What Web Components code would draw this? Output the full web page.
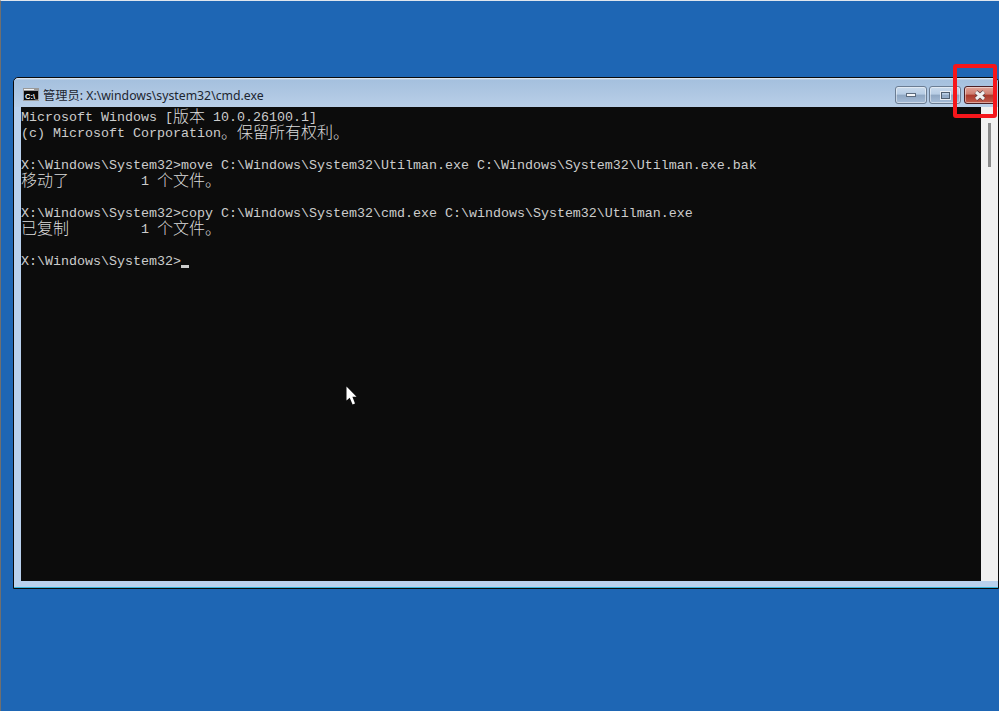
<!DOCTYPE html>
<html>
<head>
<meta charset="utf-8">
<title>cmd</title>
<style>
  html, body { margin: 0; height: 100%; overflow: hidden; background: #1e66b4; }
</style>
</head>
<body>
<win-desktop>
  <console-window title-text="管理员: X:\windows\system32\cmd.exe">
    <console-line>Microsoft Windows [<c-jk>版本</c-jk> 10.0.26100.1]</console-line>
    <console-line>(c) Microsoft Corporation<c-jk>。保留所有权利。</c-jk></console-line>
    <console-line></console-line>
    <console-line>X:\Windows\System32&gt;move C:\Windows\System32\Utilman.exe C:\Windows\System32\Utilman.exe.bak</console-line>
    <console-line><c-jk>移动了</c-jk>         1 <c-jk>个文件。</c-jk></console-line>
    <console-line></console-line>
    <console-line>X:\Windows\System32&gt;copy C:\Windows\System32\cmd.exe C:\windows\System32\Utilman.exe</console-line>
    <console-line><c-jk>已复制</c-jk>         1 <c-jk>个文件。</c-jk></console-line>
    <console-line></console-line>
    <console-line>X:\Windows\System32&gt;<console-caret></console-caret></console-line>
  </console-window>
</win-desktop>

<script>
class WinDesktop extends HTMLElement {
  constructor() {
    super();
    const shadowRoot = this.attachShadow({ mode: 'open' });
    shadowRoot.innerHTML = `
      <style>
        :host {
          display: block;
          position: relative;
          width: 999px;
          height: 711px;
          box-sizing: border-box;
          padding: 76px 0 0 12px;
          overflow: hidden;
          background: #1e66b4;
          border-left: 1px solid #6f6f6f;
          border-top: 1px solid #dfe6ee;
        }
        /* annotation drawn over the close button */
        #mark {
          position: absolute;
          left: 952px;
          top: 63px;
          width: 44px;
          height: 54px;
          box-sizing: border-box;
          border: 4px solid #f5161b;
          border-radius: 3px;
        }
        /* mouse pointer on the free canvas */
        svg { position: absolute; left: 345px; top: 385px; }
      </style>
      <slot></slot>
      <svg width="12" height="19" viewBox="0 0 12 19">
        <path d="M0.5 0.5V14.5L3.7 11.8L6.6 18.5L9 17.5L6.4 10.8H10.5Z" fill="#fff"/>
      </svg>
      <div id="mark"></div>
    `;
  }
}

class ConsoleWindow extends HTMLElement {
  constructor() {
    super();
    const shadowRoot = this.attachShadow({ mode: 'open' });
    shadowRoot.innerHTML = `
      <style>
        :host {
          display: block;
          width: 986px;
          height: 512px;
          box-sizing: border-box;
          border: 1px solid #0b0b0b;
          border-radius: 5px 5px 0 0;
          background: #b9d1ee;
          box-shadow: inset 0 -1px 0 #38b4dc;
        }
        #title {
          display: flex;
          align-items: center;
          box-sizing: border-box;
          height: 29px;
          padding: 4px 2px 0 9px;
          border-radius: 5px 5px 0 0;
          background: linear-gradient(#eaf0f7 0, #a5c0de 2px, #acc5e1 12px, #b9cfe8 29px);
          font: 12.25px "Noto Sans", "Noto Sans CJK SC", sans-serif;
          color: #1c2530;
        }
        #label { margin-left: 4px; flex: 1; white-space: pre; }
        #icon { flex: none; }
        #buttons { display: flex; align-items: flex-start; margin-top: 1px; }
        .btn {
          display: flex;
          align-items: center;
          justify-content: center;
          box-sizing: border-box;
          width: 32px;
          height: 18px;
          margin-left: 2px;
          border: 1px solid #6b7d93;
          border-radius: 3px;
          background: linear-gradient(#c9daec 0, #b7cde5 45%, #8ea6c2 50%, #a6bdd8 100%);
          box-shadow: inset 0 0 0 1px rgba(255,255,255,.45);
        }
        .btn.close {
          margin-left: 3px;
          border-color: #4b1f25;
          background: linear-gradient(#e0a398 0, #cf7e70 45%, #a9392c 50%, #c25c4c 100%);
        }
        #body { display: flex; height: 474px; margin-left: 7px; }
        #screen {
          width: 960px;
          box-sizing: border-box;
          padding-top: 3px;
          background: #0c0c0c;
          color: #cccccc;
          font: 13.333px/16px "Liberation Mono", "Noto Sans CJK SC", monospace;
          overflow: hidden;
        }
        #scroll {
          width: 17px;
          background: #f0f0f0;
          display: flex;
          justify-content: center;
          padding-top: 16px;
          box-sizing: border-box;
        }
        #thumb { width: 3px; height: 44px; background: #8a8a8a; }
      </style>
      <div id="title">
        <svg id="icon" width="16" height="13" viewBox="0 0 16 13">
          <rect width="16" height="13" fill="#9a9a9a"/>
          <rect x="1" y="3" width="14" height="9" fill="#0a0a0a"/>
          <rect x="1" y="1" width="10" height="1" fill="#f2f2f2"/>
          <text x="2" y="10.5" font-family="Liberation Sans" font-weight="700" font-size="7.5" fill="#fff">C:\\_</text>
        </svg>
        <span id="label"></span>
        <div id="buttons">
          <div class="btn">
            <svg width="10" height="4"><rect x=".5" y=".5" width="9" height="3" fill="#f4f6f9" stroke="#5c6b7d"/></svg>
          </div>
          <div class="btn">
            <svg width="11" height="9"><rect x="1" y="1" width="9" height="7" fill="none" stroke="#4e5d6e" stroke-width="2"/><rect x=".5" y=".5" width="10" height="8" fill="none" stroke="#e8edf3"/></svg>
          </div>
          <div class="btn close">
            <svg width="14" height="11" viewBox="0 0 14 11"><path d="M3 2L11 9M11 2L3 9" stroke="#5a3a3c" stroke-width="4.4"/><path d="M3 2L11 9M11 2L3 9" stroke="#f0eeee" stroke-width="3"/></svg>
          </div>
        </div>
      </div>
      <div id="body">
        <div id="screen"><slot></slot></div>
        <div id="scroll"><div id="thumb"></div></div>
      </div>
    `;
    shadowRoot.querySelector('#label').textContent = this.getAttribute('title-text');
  }
}

// no whitespace around the slot: white-space: pre is inherited into these shadow trees
class ConsoleLine extends HTMLElement {
  constructor() {
    super();
    const shadowRoot = this.attachShadow({ mode: 'open' });
    shadowRoot.innerHTML = '<style>:host { display: block; height: 16px; white-space: pre; }</style><slot></slot>';
  }
}

class CJk extends HTMLElement {
  constructor() {
    super();
    const shadowRoot = this.attachShadow({ mode: 'open' });
    shadowRoot.innerHTML = '<style>:host { display: inline-block; vertical-align: top; height: 16px; margin-top: -3px; color: #dcdcdc; font-family: "Noto Sans CJK SC", sans-serif; font-size: 16px; font-weight: 300; line-height: 16px; }</style><slot></slot>';
  }
}

class ConsoleCaret extends HTMLElement {
  constructor() {
    super();
    const shadowRoot = this.attachShadow({ mode: 'open' });
    shadowRoot.innerHTML = '<style>:host { display: inline-block; vertical-align: -3px; width: 8px; height: 3px; background: #cccccc; }</style>';
  }
}

customElements.define('win-desktop', WinDesktop);
customElements.define('console-window', ConsoleWindow);
customElements.define('console-line', ConsoleLine);
customElements.define('c-jk', CJk);
customElements.define('console-caret', ConsoleCaret);
</script>
</body>
</html>
